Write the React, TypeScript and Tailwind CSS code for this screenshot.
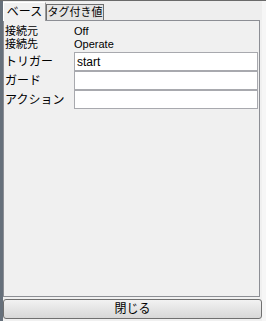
export default function App() {
  const font = { fontFamily: '"Liberation Sans", "Noto Sans CJK JP", sans-serif' };
  return (
    <div
      className="flex h-[321px] w-[266px] overflow-hidden border-t border-[#6a6a6a] bg-[#f0f0f0] text-[12px] leading-[12px] text-black"
      style={font}
    >
      <div className="w-[3px] shrink-0 bg-[#66707b]" />
      <div className="flex w-[259px] flex-col">
        {/* タブ */}
        <div className="flex h-[19px] items-end bg-[#eeeeee]">
          <div className="relative z-10 -mb-px flex h-[19px] w-[43px] items-center justify-center whitespace-nowrap border border-b-0 border-[#9a9a9a] border-l-white border-t-white bg-[#f0f0f0]">
            ベース
          </div>
          <div className="flex h-[16px] w-[58px] items-center justify-center whitespace-nowrap border border-b-0 border-[#6e6e6e] bg-[#e4e4e4] text-[11px] leading-[11px]">
            タグ付き値
          </div>
        </div>

        {/* パネル */}
        <div className="flex h-[277px] w-[257px] flex-col border border-[#8c8e94] bg-[#f0f0f0] pl-[1px] pr-[1px] pt-[4px]">
          <div className="flex h-[13px] items-center text-[11px] leading-[11px]">
            <span className="w-[69px]">接続元</span>
            <span>Off</span>
          </div>
          <div className="flex h-[13px] items-center text-[11px] leading-[11px]">
            <span className="w-[69px]">接続先</span>
            <span>Operate</span>
          </div>
          <div className="mt-[1px] flex flex-col">
            {[
              { label: "トリガー", value: "start" },
              { label: "ガード", value: "" },
              { label: "アクション", value: "" },
            ].map((r) => (
              <div key={r.label} className="flex h-[19px] items-center">
                <span className="w-[69px] whitespace-nowrap">{r.label}</span>
                <div className="flex h-[19px] flex-1 items-center border border-[#a8a9ae] bg-white px-[2px]">
                  {r.value}
                </div>
              </div>
            ))}
          </div>
        </div>

        {/* 閉じるボタン */}
        <button
          className="mt-[2px] flex h-[20px] w-[259px] items-center justify-center rounded-[3px] border border-[#707070] bg-gradient-to-b from-[#f2f2f2] to-[#d8d8d8] text-[12px]"
          style={font}
        >
          閉じる
        </button>
      </div>
      <div className="flex-1 bg-[#f6f6f6]" />
    </div>
  );
}
